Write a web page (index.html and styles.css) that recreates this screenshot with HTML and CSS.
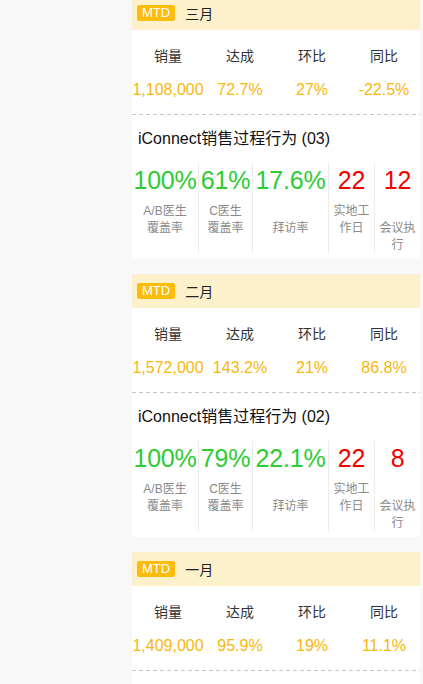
FILE: index.html
```html
<!DOCTYPE html>
<html lang="zh">
<head>
<meta charset="utf-8">
<link rel="stylesheet" href="styles.css">
</head>
<body>
<main class="list">
  <section class="month">
    <div class="month-head"><span class="badge">MTD</span><span class="month-name">三月</span></div>
    <div class="card">
      <div class="stats">
        <div class="stat"><div class="stat-label">销量</div><div class="stat-value">1,108,000</div></div>
        <div class="stat"><div class="stat-label">达成</div><div class="stat-value">72.7%</div></div>
        <div class="stat"><div class="stat-label">环比</div><div class="stat-value">27%</div></div>
        <div class="stat"><div class="stat-label">同比</div><div class="stat-value">-22.5%</div></div>
      </div>
      <div class="dash"></div>
      <h2 class="title">iConnect销售过程行为 (03)</h2>
      <div class="metrics">
        <div class="metric"><div class="num green">100%</div><div class="lbl top"><span>A/B医生</span><span>覆盖率</span></div></div>
        <div class="metric"><div class="num green">61%</div><div class="lbl top"><span>C医生</span><span>覆盖率</span></div></div>
        <div class="metric"><div class="num green">17.6%</div><div class="lbl mid"><span>拜访率</span></div></div>
        <div class="metric"><div class="num red">22</div><div class="lbl top"><span>实地工</span><span>作日</span></div></div>
        <div class="metric"><div class="num red">12</div><div class="lbl bottom"><span>会议执</span><span>行</span></div></div>
      </div>
    </div>
  </section>

  <section class="month">
    <div class="month-head"><span class="badge">MTD</span><span class="month-name">二月</span></div>
    <div class="card">
      <div class="stats">
        <div class="stat"><div class="stat-label">销量</div><div class="stat-value">1,572,000</div></div>
        <div class="stat"><div class="stat-label">达成</div><div class="stat-value">143.2%</div></div>
        <div class="stat"><div class="stat-label">环比</div><div class="stat-value">21%</div></div>
        <div class="stat"><div class="stat-label">同比</div><div class="stat-value">86.8%</div></div>
      </div>
      <div class="dash"></div>
      <h2 class="title">iConnect销售过程行为 (02)</h2>
      <div class="metrics">
        <div class="metric"><div class="num green">100%</div><div class="lbl top"><span>A/B医生</span><span>覆盖率</span></div></div>
        <div class="metric"><div class="num green">79%</div><div class="lbl top"><span>C医生</span><span>覆盖率</span></div></div>
        <div class="metric"><div class="num green">22.1%</div><div class="lbl mid"><span>拜访率</span></div></div>
        <div class="metric"><div class="num red">22</div><div class="lbl top"><span>实地工</span><span>作日</span></div></div>
        <div class="metric"><div class="num red">8</div><div class="lbl bottom"><span>会议执</span><span>行</span></div></div>
      </div>
    </div>
  </section>

  <section class="month">
    <div class="month-head"><span class="badge">MTD</span><span class="month-name">一月</span></div>
    <div class="card card-tail">
      <div class="stats">
        <div class="stat"><div class="stat-label">销量</div><div class="stat-value">1,409,000</div></div>
        <div class="stat"><div class="stat-label">达成</div><div class="stat-value">95.9%</div></div>
        <div class="stat"><div class="stat-label">环比</div><div class="stat-value">19%</div></div>
        <div class="stat"><div class="stat-label">同比</div><div class="stat-value">11.1%</div></div>
      </div>
      <div class="dash"></div>
    </div>
  </section>
</main>
</body>
</html>
```

FILE: styles.css
```css
* { box-sizing: border-box; }

html, body {
  margin: 0;
  padding: 0;
  background: #f8f8f8;
  font-family: "Liberation Sans", "Noto Sans CJK SC", sans-serif;
  color: #333;
  overflow: hidden;
}

.list {
  margin: -4px 3px 0 132px;
  display: flex;
  flex-direction: column;
  gap: 15px;
}

.month-head {
  height: 34px;
  background: #fdf1cc;
  display: flex;
  align-items: center;
  padding-left: 5px;
}

.badge {
  display: inline-block;
  height: 16px;
  line-height: 16px;
  padding: 0 5px;
  background: #fbbc0b;
  color: #fff;
  font-size: 13px;
  border-radius: 2px;
}

.month-name {
  margin-left: 10px;
  font-size: 14px;
  color: #222;
}

.card {
  background: #fff;
  padding-bottom: 6px;
}

.card-tail {
  padding-bottom: 30px;
}

.stats {
  display: grid;
  grid-template-columns: repeat(4, 1fr);
  padding: 16px 0 14px;
}

.stat {
  display: flex;
  flex-direction: column;
  align-items: center;
  gap: 14px;
}

.stat-label {
  height: 20px;
  line-height: 20px;
  font-size: 14px;
  color: #333;
}

.stat-value {
  height: 20px;
  line-height: 20px;
  font-size: 16px;
  color: #f7b70d;
  white-space: nowrap;
}

.dash {
  height: 1px;
  background: repeating-linear-gradient(to right, #c4c4c4 0 4px, transparent 4px 7px);
}

.title {
  margin: 0;
  padding: 13px 0 0 6px;
  height: 36px;
  line-height: 22px;
  font-size: 16px;
  font-weight: normal;
  color: #111;
}

.metrics {
  margin-top: 12px;
  display: grid;
  grid-template-columns: 67px 54px 76px 46px 45px;
  height: 90px;
}

.metric {
  border-right: 1px solid #f0ebeb;
  display: flex;
  flex-direction: column;
  align-items: center;
  padding-top: 2px;
}

.metric:last-child { border-right: none; }

.num {
  height: 30px;
  line-height: 30px;
  font-size: 25px;
  white-space: nowrap;
  letter-spacing: -0.2px;
}

.green { color: #2ecc33; }
.red { color: #f40000; }

.lbl {
  margin-top: 8px;
  height: 50px;
  display: flex;
  flex-direction: column;
  align-items: center;
  font-size: 12px;
  line-height: 16.5px;
  color: #8a8a8a;
}

.lbl.top { justify-content: flex-start; }
.lbl.mid { justify-content: center; }
.lbl.bottom { justify-content: flex-end; }
```
